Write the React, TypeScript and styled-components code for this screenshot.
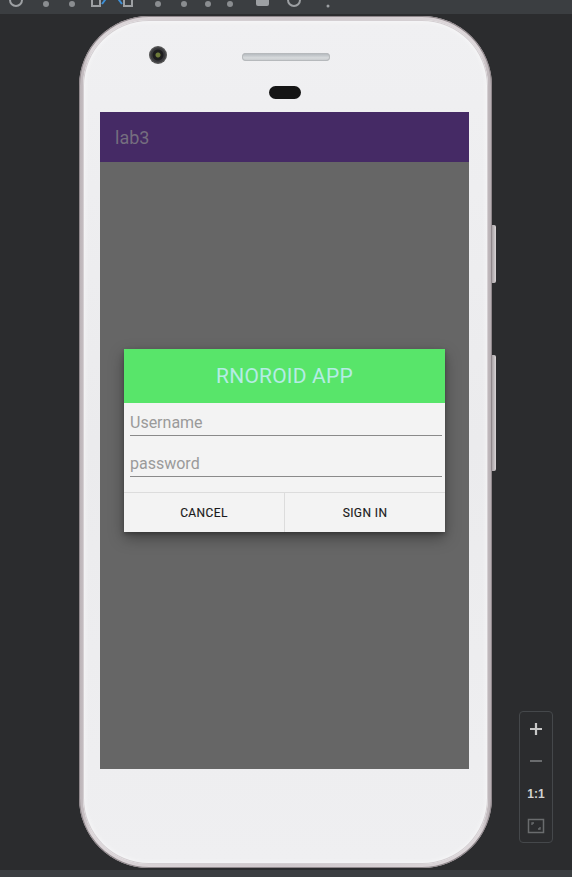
import React from "react";
import styled, { createGlobalStyle } from "styled-components";

const Global = createGlobalStyle`
  html, body { margin: 0; padding: 0; background: #2b2c2e; }
  body { font-family: Roboto, "Noto Sans", sans-serif; }
  * { box-sizing: border-box; }
`;

const Page = styled.div`
  width: 572px;
  height: 877px;
  display: flex;
  flex-direction: column;
  background: #2b2c2e;
  overflow: hidden;
`;

const Toolbar = styled.div`
  height: 14px;
  flex: none;
  background: #3b3e41;
  overflow: hidden;
  position: relative;
`;

const ToolIcon = styled.div<{ $x: number }>`
  position: absolute;
  left: ${(p) => p.$x}px;
  top: -8px;
  width: 16px;
  height: 16px;
  display: flex;
  align-items: center;
  justify-content: center;
`;

const Stage = styled.div`
  flex: 1;
  position: relative;
  padding: 2px 0 0 79px;
`;

const BottomBar = styled.div`
  height: 7px;
  flex: none;
  background: #3b3e41;
`;

const Phone = styled.div`
  width: 413px;
  height: 852px;
  border-radius: 70px;
  padding: 4px;
  background: linear-gradient(90deg, #b9b1b5 0%, #ddd7da 3%, #cfc8cc 50%, #ddd7da 97%, #b3abaf 100%);
  box-shadow: inset 0 0 0 1px #8f878b;
  position: relative;
`;

const Body = styled.div`
  width: 100%;
  height: 100%;
  border-radius: 66px;
  background: linear-gradient(180deg, #f0f0f2 0%, #ebebed 50%, #efeff1 100%);
  box-shadow: inset 0 0 0 1px #d4cfd2, inset 0 0 6px rgba(255,255,255,0.9);
  display: flex;
  flex-direction: column;
  padding: 0 17px 0 17px;
`;

const TopArea = styled.div`
  height: 92px;
  flex: none;
  position: relative;
`;

const Camera = styled.div`
  position: absolute;
  left: 49px;
  top: 26px;
  width: 18px;
  height: 18px;
  border-radius: 50%;
  background: radial-gradient(circle at 50% 50%, #6d7a3a 0 2px, #1d1d1f 3px 5px, #3a3a3d 6px 7px, #555 8px);
`;

const Speaker = styled.div`
  position: absolute;
  left: 142px;
  top: 33px;
  width: 88px;
  height: 8px;
  border-radius: 4px;
  background: linear-gradient(180deg, #aeb3b8, #d7dadc 60%, #c3c6c9);
  box-shadow: inset 0 0 0 1px #b6b9bc;
`;

const Earpiece = styled.div`
  position: absolute;
  left: 169px;
  top: 66px;
  width: 32px;
  height: 13px;
  border-radius: 7px;
  background: #151515;
`;

const Screen = styled.div`
  width: 369px;
  height: 657px;
  flex: none;
  display: flex;
  flex-direction: column;
  background: #666666;
`;

const AppBar = styled.div`
  height: 50px;
  flex: none;
  background: #452a65;
  display: flex;
  align-items: center;
  padding-left: 15px;
  color: #756e7f;
  font-size: 18px;
`;

const Content = styled.div`
  flex: 1;
  display: flex;
  align-items: flex-start;
  justify-content: center;
  padding-top: 187px;
`;

const Dialog = styled.div`
  width: 321px;
  background: #f3f3f3;
  box-shadow: 0 6px 14px rgba(0, 0, 0, 0.35), 0 2px 4px rgba(0,0,0,0.25);
  display: flex;
  flex-direction: column;
`;

const DialogHeader = styled.div`
  height: 54px;
  background: #58e56a;
  display: flex;
  align-items: center;
  justify-content: center;
  color: #b5ece4;
  font-size: 21px;
  letter-spacing: 0.2px;
`;

const Fields = styled.div`
  display: flex;
  flex-direction: column;
  padding: 1px 3px 15px 6px;
  gap: 9px;
`;

const Field = styled.div`
  height: 32px;
  border-bottom: 1px solid #8a8a8a;
  display: flex;
  align-items: flex-end;
  padding-bottom: 3px;
  color: #9a9a9a;
  font-size: 16px;
`;

const Buttons = styled.div`
  display: grid;
  grid-template-columns: 161px 1fr;
  border-top: 1px solid #dcdcdc;
  height: 40px;
`;

const Btn = styled.div<{ $divider?: boolean }>`
  display: flex;
  align-items: center;
  justify-content: center;
  font-size: 12px;
  font-weight: 400;
  -webkit-text-stroke: 0.15px #1a1a1a;
  color: #1a1a1a;
  letter-spacing: 0.4px;
  border-right: ${(p) => (p.$divider ? "1px solid #dcdcdc" : "none")};
`;

const SideButton = styled.div<{ $top: number; $h: number }>`
  position: absolute;
  right: -4px;
  top: ${(p) => p.$top}px;
  width: 4px;
  height: ${(p) => p.$h}px;
  border-radius: 0 2px 2px 0;
  background: linear-gradient(90deg, #a9a3a6, #d9d4d6);
`;

const ZoomPanel = styled.div`
  position: absolute;
  left: 519px;
  top: 697px;
  width: 34px;
  height: 132px;
  border: 1px solid #45484b;
  border-radius: 4px;
  background: #2b2c2e;
  display: flex;
  flex-direction: column;
  align-items: center;
  padding-top: 1px;
`;

const ZoomItem = styled.div`
  height: 33px;
  width: 100%;
  display: flex;
  align-items: center;
  justify-content: center;
  color: #d2d2d2;
  font-family: "Liberation Sans", Arial, sans-serif;
  font-size: 12px;
  font-weight: bold;
`;

export default function App() {
  const toolXs = [8, 38, 64, 90, 118, 150, 176, 200, 222, 254, 286, 320];
  return (
    <>
      <Global />
      <Page>
        <Toolbar>
          {toolXs.map((x, i) => (
            <ToolIcon key={i} $x={x}>
              <svg width="16" height="16" viewBox="0 0 16 16">
                {i === 0 || i === 10 ? (
                  <circle cx="8" cy="8" r="6" fill="none" stroke="#9da0a3" strokeWidth="2" />
                ) : i === 3 ? (
                  <g>
                    <rect x="2" y="2" width="8" height="12" fill="none" stroke="#9da0a3" strokeWidth="2" />
                    <path d="M12 4 L15 8 L12 12" fill="none" stroke="#3d8fd6" strokeWidth="2" />
                  </g>
                ) : i === 4 ? (
                  <g>
                    <path d="M4 4 L1 8 L4 12" fill="none" stroke="#3d8fd6" strokeWidth="2" />
                    <rect x="6" y="2" width="8" height="12" fill="none" stroke="#9da0a3" strokeWidth="2" />
                  </g>
                ) : i === 9 ? (
                  <rect x="2" y="2" width="13" height="12" rx="2" fill="#9da0a3" />
                ) : i === 11 ? (
                  <circle cx="8" cy="14" r="1.5" fill="#9da0a3" />
                ) : (
                  <circle cx="8" cy="12" r="3" fill="#8a8d90" />
                )}
              </svg>
            </ToolIcon>
          ))}
        </Toolbar>
        <Stage>
          <Phone>
            <SideButton $top={209} $h={58} />
            <SideButton $top={339} $h={116} />
            <Body>
              <TopArea>
                <Camera />
                <Speaker />
                <Earpiece />
              </TopArea>
              <Screen>
                <AppBar>lab3</AppBar>
                <Content>
                  <Dialog>
                    <DialogHeader>RNOROID APP</DialogHeader>
                    <Fields>
                      <Field>Username</Field>
                      <Field>password</Field>
                    </Fields>
                    <Buttons>
                      <Btn $divider>CANCEL</Btn>
                      <Btn>SIGN IN</Btn>
                    </Buttons>
                  </Dialog>
                </Content>
              </Screen>
            </Body>
          </Phone>
          <ZoomPanel>
            <ZoomItem>
              <svg width="14" height="14" viewBox="0 0 14 14">
                <path d="M7 1 V13 M1 7 H13" stroke="#c8c8c8" strokeWidth="2.2" />
              </svg>
            </ZoomItem>
            <ZoomItem>
              <svg width="14" height="14" viewBox="0 0 14 14">
                <path d="M1 7 H13" stroke="#6a6c6e" strokeWidth="2" />
              </svg>
            </ZoomItem>
            <ZoomItem>1:1</ZoomItem>
            <ZoomItem>
              <svg width="18" height="16" viewBox="0 0 18 16">
                <rect x="1.5" y="1.5" width="15" height="13" fill="none" stroke="#6a6c6e" strokeWidth="1.5" />
                <path d="M5 7 V5 H7 M13 9 V11 H11" fill="none" stroke="#6a6c6e" strokeWidth="1.3" />
              </svg>
            </ZoomItem>
          </ZoomPanel>
        </Stage>
        <BottomBar />
      </Page>
    </>
  );
}
